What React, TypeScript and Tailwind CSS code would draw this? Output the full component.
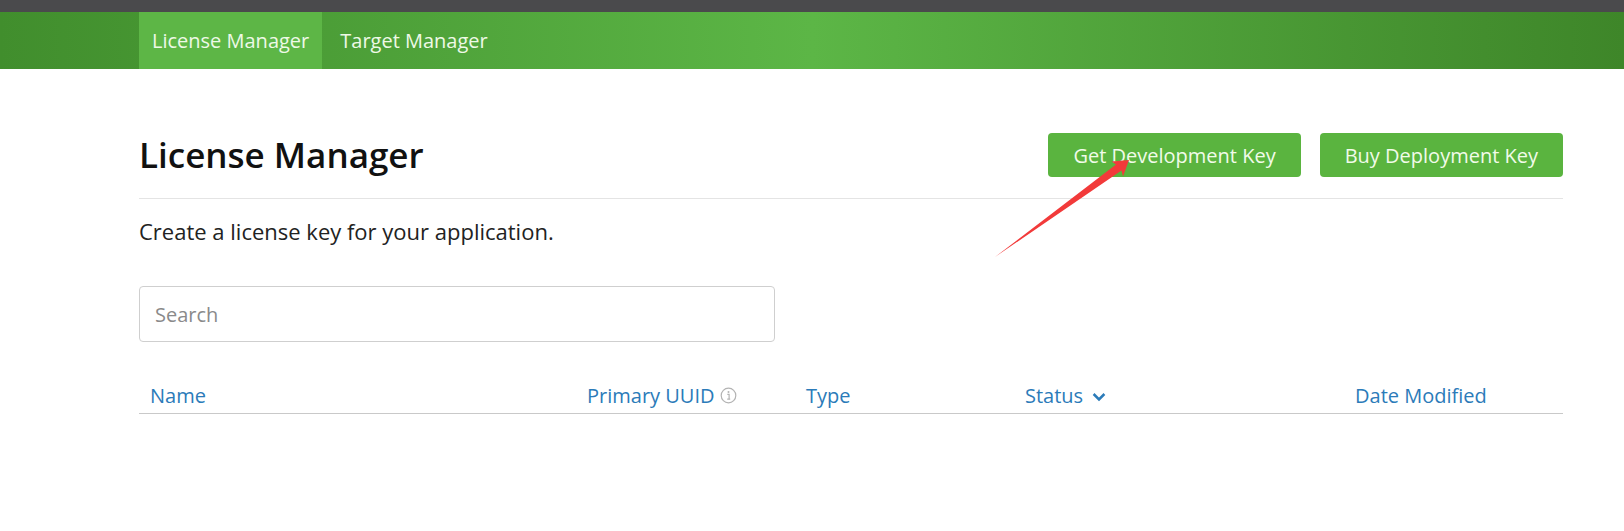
import React from 'react';

const columns = [
  { id: 'name', label: 'Name' },
  { id: 'uuid', label: 'Primary UUID', info: true },
  { id: 'type', label: 'Type' },
  { id: 'status', label: 'Status', sort: true },
  { id: 'modified', label: 'Date Modified' }
];

const InfoIcon: React.FC = () => (
  <svg width="17" height="17" viewBox="0 0 17 17" className="ml-[5px]">
    <circle cx="8.5" cy="8.5" r="7.3" fill="none" stroke="#b3b3b3" strokeWidth="1.2" />
    <circle cx="8.5" cy="5" r="1" fill="#b3b3b3" />
    <path d="M7.3 7.4h1.8v4.6M7.2 12.2h3" fill="none" stroke="#b3b3b3" strokeWidth="1.2" />
  </svg>
);

const Chevron: React.FC = () => (
  <svg width="14" height="10" viewBox="0 0 14 10" className="ml-[9px] mt-[3px]">
    <path d="M1.6 2l5.4 5.4 5.4-5.4" fill="none" stroke="#2b7bb9" strokeWidth="2.5" />
  </svg>
);

const App: React.FC = () => {
  return (
    <div className="relative w-[1624px] h-[531px] bg-white overflow-hidden font-['Open_Sans','Noto_Sans',sans-serif]">
      <div className="h-[12px] bg-[#4a4a4c]" />
      <nav className="h-[57px] bg-gradient-to-r from-[#418e2d] via-[#5cb646] to-[#3e8629]">
        <div className="ml-[139px] flex h-full">
          <a className="flex items-center px-[13px] bg-[#5db646] text-[20px] text-[#eef9e6]">License Manager</a>
          <a className="flex items-center px-[18px] text-[20px] text-[#eef9e6]">Target Manager</a>
        </div>
      </nav>

      <main className="ml-[139px] w-[1424px]">
        <div className="mt-[64px] pb-[21px] flex items-center justify-between border-b border-[#e4e4e4]">
          <h1 className="text-[35px] font-semibold text-[#111] leading-[44px]">License Manager</h1>
          <div className="flex gap-[19px]">
            <button className="h-[44px] px-[25px] pt-[1px] rounded-[4px] bg-[#5ab43f] text-[20px] text-[#f1fbe9]">
              Get Development Key
            </button>
            <button className="h-[44px] px-[25px] pt-[1px] rounded-[4px] bg-[#5ab43f] text-[20px] text-[#f1fbe9]">
              Buy Deployment Key
            </button>
          </div>
        </div>

        <p className="mt-[17px] text-[22px] leading-[30px] text-[#222]">Create a license key for your application.</p>

        <input
          placeholder="Search"
          className="mt-[40px] block h-[56px] w-[636px] rounded-[4px] border border-[#cfcfcf] px-[15px] text-[20px] placeholder:text-[#8a8a8a] outline-none"
        />

        <div className="mt-[36px] h-[36px] grid grid-cols-[437px_219px_219px_330px_219px] border-b border-[#c9c9c9]">
          {columns.map((col) => (
            <div key={col.id} className="flex items-center px-[11px] text-[20px] text-[#2b7bb9]">
              {col.label}
              {col.info && <InfoIcon />}
              {col.sort && <Chevron />}
            </div>
          ))}
        </div>
      </main>

      {/* annotation arrow */}
      <svg className="absolute top-0 left-0 pointer-events-none" width="1624" height="531">
        <polygon
          points="995,257 1121.5,170.5 1123,176.5 1129,160 1111.5,161.5 1116,164.5"
          fill="#f23a3a"
        />
      </svg>
    </div>
  );
};

export default App;
